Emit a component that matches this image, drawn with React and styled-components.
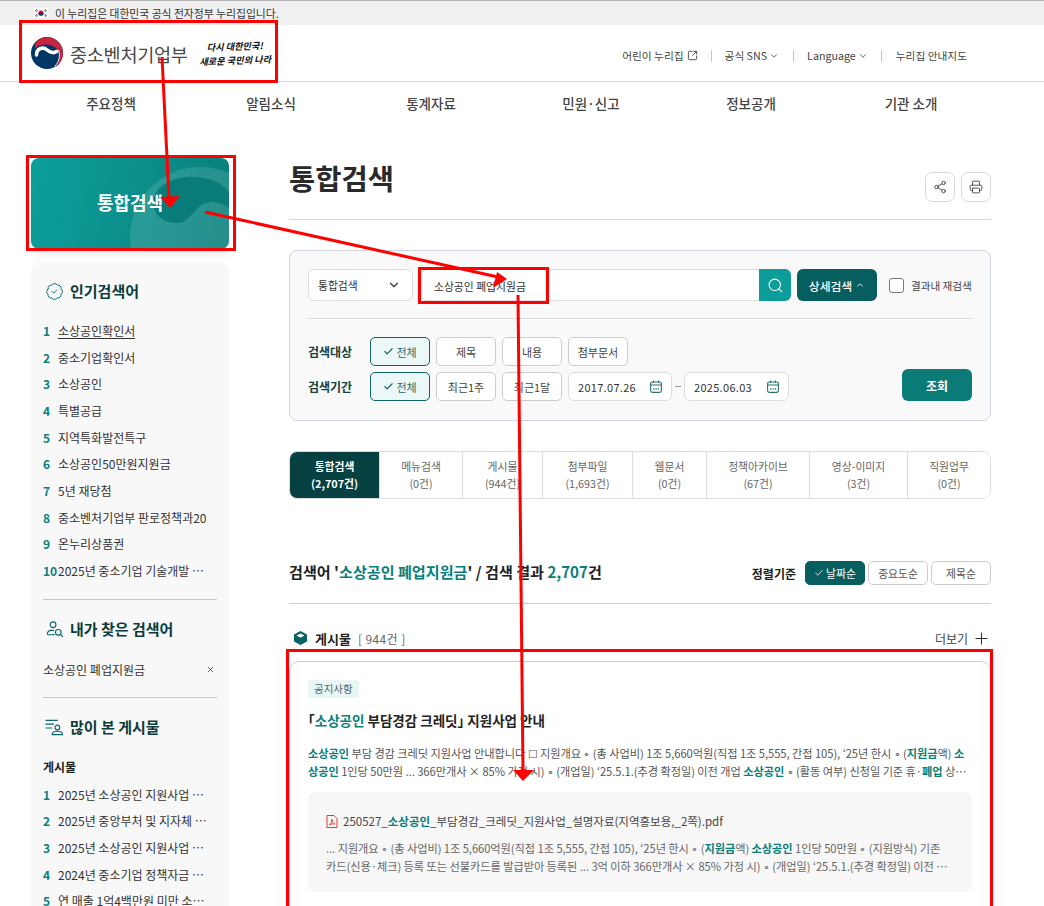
import React from 'react';
import styled, { createGlobalStyle } from 'styled-components';
import { ChevronDown, ChevronUp, SquareArrowOutUpRight, Share2, Printer, Search, Check, Plus, X, BadgeCheck } from 'lucide-react';

const FONT = '"Noto Sans CJK KR", "Noto Sans", sans-serif';
const Global = createGlobalStyle`
  html, body { margin: 0; padding: 0; background: #fff; }
  body { font-family: ${FONT}; color: #333; }
  #root { height: 906px; overflow: hidden; position: relative; }
  * { box-sizing: border-box; }
`;

const TEAL = '#0a7f7c';

const Page = styled.div`width: 1044px; height: 906px; position: relative; overflow: hidden;`;
const TopBar = styled.div`
  height: 25px; background: #f0f0f0; border-top: 1px solid #b5b5b5; padding-left: 34px;
  display: flex; align-items: center; gap: 7px; font-size: 10.8px; color: #333;
`;
const Header = styled.header`
  height: 57px; border-bottom: 1px solid #d9d9d9; padding: 0 77px 0 31px;
  display: flex; align-items: center; justify-content: space-between;
`;
const Logo = styled.div`display: flex; align-items: center; gap: 7px;`;
const LogoText = styled.span`font-size: 18.6px; color: #4a4a4a; letter-spacing: -0.3px; font-weight: 400;`;
const Slogan = styled.div`
  margin-left: 4px; font-size: 9.2px; line-height: 14px; color: #111; font-weight: 700;
  font-style: italic; transform: rotate(-2deg); text-align: center; white-space: nowrap;
`;
const Util = styled.nav`display: flex; align-items: center; font-size: 10.7px; color: #444; margin-top: 5px;`;
const UtilItem = styled.span`
  display: inline-flex; align-items: center; gap: ${p => p.$g || 3}px; padding: 0 ${p => p.$r || 13}px 0 14px; position: relative; line-height: 12px;
  &:last-child { padding: 0 0 0 15px; }
  &:not(:first-child)::before { content: ""; position: absolute; left: 0; top: 0; width: 1px; height: 12px; background: #c4c4c4; }
`;
const MainNav = styled.nav`
  width: 960px; margin-left: 31px; height: 42px; display: grid; grid-template-columns: repeat(6, 1fr);
  align-items: center; font-size: 13.5px; font-weight: 500; color: #444; text-align: center;
`;
const Body = styled.div`display: flex; gap: 60px; padding: 34px 0 0 31px;`;
const Side = styled.aside`width: 198px; flex: none; display: flex; flex-direction: column; gap: 13px;`;
const Hero = styled.div`
  height: 91px; border-radius: 8px; position: relative; overflow: hidden;
  background: linear-gradient(100deg, #0c9f9b, #0a7f7c);
  box-shadow: 0 6px 10px rgba(0,0,0,.08);
  display: flex; align-items: center; justify-content: center;
  color: #fff; font-size: 18px; font-weight: 700;
`;
const HeroArt = styled.svg`position: absolute; left: 0; top: 0;`;
const HeroLabel = styled.span`position: relative; margin-top: -4px;`;
const Panel = styled.div`background: #f8f8f8; border-radius: 10px 10px 0 0; padding: 17px 12px 0; height: 700px;`;
const PanelTitle = styled.h3`
  margin: 0; display: flex; align-items: center; gap: 6px; font-size: 15px; font-weight: 700; color: #0b3b3b;
  line-height: 24px; padding-left: 2px;
`;
const RankList = styled.ol`list-style: none; margin: ${p => p.$m || '15px 0 0'}; padding: 0;`;
const Rank = styled.li`display: flex; font-size: 12px; line-height: 26.67px; color: #333;`;
const RankNo = styled.b`width: 15px; flex: none; color: ${TEAL}; font-weight: 700;`;
const RankText = styled.span`
  flex: 0 1 auto; max-width: 152px; overflow: hidden; white-space: nowrap; text-overflow: ellipsis;
  ${p => p.$u && `text-decoration: underline; text-underline-offset: 2px;`}
`;
const SideRule = styled.hr`border: 0; border-top: 1px solid #c8c8c8; margin: ${p => p.$m || '14px 0 17px'};`;
const Recent = styled.div`
  display: flex; justify-content: space-between; align-items: center; font-size: 12px; color: #333; padding-right: 2px;
  margin-top: 20px; line-height: 18px;
`;
const SubHead = styled.div`font-size: 12px; font-weight: 700; color: #222; margin-top: 19px; line-height: 18px;`;
const Main = styled.main`width: 702px; flex: none;`;
const TitleRow = styled.div`
  height: 64px; margin-top: -2px; border-bottom: 1px solid #d9d9d9; display: flex; justify-content: space-between; align-items: flex-start;
`;
const H1 = styled.h1`margin: 1px 0 0; font-size: 28.5px; font-weight: 700; color: #2a2a2a; line-height: 42px;`;
const Tools = styled.div`display: flex; gap: 6px; margin-top: 16px;`;
const ToolBtn = styled.button`
  width: 30px; height: 30px; border: 1px solid #d9d9d9; border-radius: 7px; background: #fff; padding: 0;
  display: flex; align-items: center; justify-content: center; color: #333;
`;
const SearchPanel = styled.section`
  margin-top: 30px; height: 171px; background: #f9f9fa; border: 1px solid #cfd5de; border-radius: 8px; padding: 18px;
`;
const SearchRow = styled.div`display: flex; align-items: center; height: 32px;`;
const Select = styled.div`
  width: 105px; height: 32px; background: #fff; border: 1px solid #ddd; border-radius: 6px; padding: 0 11px 0 9px;
  display: flex; align-items: center; justify-content: space-between; font-size: 10.8px; color: #333; margin-right: 8px;
`;
const Input = styled.div`
  width: 338px; height: 32px; background: #fff; border: 1px solid #ddd; border-right: 0; border-radius: 6px 0 0 6px;
  display: flex; align-items: center; padding-left: 12px; font-size: 10.8px; color: #333; padding-top: 2px;
`;
const SearchBtn = styled.button`
  width: 32px; height: 32px; border: 0; padding: 0; background: #0c9c9a; border-radius: 0 6px 6px 0; color: #fff;
  display: flex; align-items: center; justify-content: center; margin-right: 6px;
`;
const Detail = styled.button`
  width: 80px; height: 32px; border: 0; padding: 0; background: #075e5e; border-radius: 6px; color: #fff;
  font: 500 11.8px ${FONT}; display: flex; align-items: center; justify-content: center; gap: 3px; margin-right: 12px;
`;
const Box = styled.span`width: 15px; height: 15px; flex: none; background: #fff; border: 1px solid #777; border-radius: 3px; margin-right: 7px;`;
const BoxLabel = styled.span`font-size: 10.6px; color: #444; white-space: nowrap;`;
const Rule = styled.hr`border: 0; border-top: 1px solid #ddd; margin: 17px 0 18px;`;
const FilterArea = styled.div`display: flex; justify-content: space-between; align-items: flex-end;`;
const FilterRows = styled.div`display: flex; flex-direction: column; gap: 6px;`;
const FilterRow = styled.div`display: flex; align-items: center; gap: 6px;`;
const FilterLabel = styled.b`width: 56px; font-size: 12px; font-weight: 700; color: #163f3f;`;
const Chip = styled.span`
  width: 60px; height: 29px; border-radius: 5px; display: inline-flex; align-items: center; justify-content: center; gap: 2px;
  font-size: 11px; color: ${p => p.$on ? '#2a6a6a' : '#444'};
  background: ${p => p.$on ? '#ecf7f7' : '#fff'};
  border: 1px solid ${p => p.$on ? '#0d6464' : '#ccc'};
`;
const DateBox = styled.span`
  width: ${p => p.$w}px; height: 29px; background: #fff; border: 1px solid #ddd; border-radius: 6px; padding: 0 9px;
  display: inline-flex; align-items: center; justify-content: space-between; font-size: 11px; color: #333; letter-spacing: .3px;
`;
const Dash = styled.span`margin: 0 -3px; flex: 0 0 6px; height: 1px; background: #999;`;
const Go = styled.button`
  width: 70px; height: 32px; border: 0; background: #0b7b78; color: #fff; border-radius: 6px;
  font: 700 12px ${FONT};
`;
const Tabs = styled.div`
  margin-top: 30px; height: 48px; display: grid; grid-template-columns: 89px 83px 80px 90px 74px 103px 98px 83px;
  border: 1px solid #ddd; border-radius: 8px; overflow: hidden;
`;
const Tab = styled.div`
  display: flex; flex-direction: column; align-items: center; justify-content: center; font-size: 10.8px; line-height: 17px;
  margin: -1px 0;
  color: ${p => p.$on ? '#fff' : '#666'}; font-weight: ${p => p.$on ? 700 : 400};
  background: ${p => p.$on ? '#064040' : '#fff'};
  &:not(:first-child) { border-left: 1px solid #ddd; }
`;
const ResultBar = styled.div`
  margin-top: 54px; height: 51px; padding-bottom: 14px; border-bottom: 1px solid #ccc;
  display: flex; align-items: center; justify-content: space-between;
`;
const ResultTitle = styled.h2`margin: 0; font-size: 15.1px; font-weight: 700; color: #222;`;
const Hl = styled.span`color: ${TEAL};`;
const Sort = styled.div`display: flex; align-items: center; gap: 3px; margin-top: 4px;`;
const SortLabel = styled.b`font-size: 12px; font-weight: 700; color: #222; margin-right: 6px;`;
const SortBtn = styled.span`
  width: 60px; height: 24px; border-radius: 5px; display: inline-flex; align-items: center; justify-content: center; gap: 2px; font-size: 10.8px;
  color: ${p => p.$on ? '#fff' : '#555'}; background: ${p => p.$on ? '#075e5e' : '#fff'};
  border: 1px solid ${p => p.$on ? '#075e5e' : '#ccc'};
`;
const SectionHead = styled.div`margin-top: 23px; height: 22px; display: flex; align-items: center; padding: 0 0 0 5px;`;
const SectionName = styled.b`font-size: 13px; font-weight: 700; color: #222; margin-left: 8px;`;
const SectionCount = styled.span`font-size: 12px; color: #666; margin-left: 7px; letter-spacing: .4px;`;
const More = styled.span`margin-left: auto; font-size: 12px; color: #444; display: inline-flex; align-items: center; gap: 4px;`;
const Card = styled.article`margin-top: 12px; border: 1px solid #ccc; border-radius: 10px; padding: 18px 18px 0; height: 300px;`;
const Badge = styled.span`
  display: block; width: fit-content; background: #e9f6f6; color: #4a6a6a; font-size: 10.5px; line-height: 18px; height: 18px; padding: 0 6px; border-radius: 3px;
`;
const CardTitle = styled.h3`margin: 10px 0 0; font-size: 13.5px; font-weight: 700; color: #222; line-height: 24px;`;
const Corner = styled.span`font-feature-settings: "halt";`;
const Clamp = styled.p`
  margin: ${p => p.$m}; font-size: 11.2px; letter-spacing: -.05px; line-height: 18px; color: ${p => p.$c || '#555'};
  display: -webkit-box; -webkit-box-orient: vertical; -webkit-line-clamp: 2; overflow: hidden; word-break: break-all;
  & b { color: ${TEAL}; font-weight: 700; }
`;
const FileBox = styled.div`margin-top: 12px; height: 100px; background: #f7f7f7; border-radius: 8px; padding: 19px 18px 0;`;
const FileName = styled.div`
  display: flex; align-items: center; gap: 5px; font-size: 11.5px; line-height: 20px; color: #444;
  & b { color: ${TEAL}; font-weight: 700; }
`;
const Overlay = styled.svg`position: absolute; left: 0; top: 0; pointer-events: none;`;

const Flag = () => (
  <svg width="14" height="10" viewBox="0 0 14 10"><rect width="14" height="10" fill="#fff" /><circle cx="7" cy="5" r="2.6" fill="#c60c30" /><path d="M4.4 5a2.6 2.6 0 0 0 5.2 0c-1 1-1.6-.6-2.6 0s-1.6.8-2.6 0z" fill="#003478" /><path d="M1.5 3 3 1M2 4l1.6-2M11 1l1.5 2M10.500 2l1.600 2M1.500 7 3 9M11 9l1.500-2M10.500 8l1.600-2M2 6l1.600 2" stroke="#333" strokeWidth=".7" /></svg>
);
const Emblem = () => (
  <svg width="32" height="32" viewBox="0 0 32 32">
    <circle cx="16" cy="16" r="16" fill="#003764" />
    <path d="M5 4.500A16 16 0 0 1 32 16C32 22 29 27 25 30 28 25 29.500 20 28 15.500 26 10 20 7.500 14.500 7.500 10.500 7.500 7.500 8.500 4.500 11.500 3.500 9 4 6.500 5 4.500Z" fill="#c9243f" />
    <path d="M5.500 18C5.500 11.500 12 9.500 15.500 12.500 18.500 15 22 17 25.500 14.500" fill="none" stroke="#fff" strokeWidth="3.6" strokeLinecap="round" />
    <path d="M27.500 13C29.500 19 28 25 24 29" fill="none" stroke="#fff" strokeWidth="1" />
  </svg>
);
const PersonSearch = () => (
  <svg width="19" height="20" viewBox="0 0 20 20" fill="none" stroke="#0a6a6a" strokeWidth="1.200" strokeLinecap="round"><circle cx="8.500" cy="5.500" r="3" /><path d="M9 11.500H6.500a4 4 0 0 0-4 3.500c0 .6.400 1 1 1H10" /><circle cx="14" cy="13.500" r="3" /><path d="m16.200 15.700 2.300 2.300" /></svg>
);
const ListPerson = () => (
  <svg width="19" height="20" viewBox="0 0 20 20" fill="none" stroke="#0a6a6a" strokeWidth="1.200" strokeLinecap="round"><path d="M1 3h12M1 7h8M1 11h6" /><circle cx="13" cy="10.500" r="2.500" /><path d="M7.500 18c0-2.500 2-3.500 5.500-3.500s5.500 1 5.500 3.500z" /></svg>
);
const Cube = () => (
  <svg width="13" height="14" viewBox="0 0 13 14"><path d="M6.500 0 13 3.500v7L6.500 14 0 10.500v-7z" fill="#0a5f5f" /><path d="M6.500 2.500 10.500 4.600 6.500 6.800 2.500 4.600z" fill="#fff" /></svg>
);
const Pdf = () => (
  <svg width="12" height="13" viewBox="0 0 12 13" fill="none" stroke="#e5383b"><path d="M1 .5h7l3 3v9H1z" /><path d="M3 10c2-1 3-3 3-6 0 3 1 4 3 5-2-.3-4 0-6 1z" strokeWidth=".9" /></svg>
);
const Cal = () => (
  <svg width="12" height="13" viewBox="0 0 12 13" fill="none" stroke="#2a6f6f" strokeWidth="1.100">
    <rect x=".6" y="2" width="10.800" height="10.400" rx="1.800" />
    <path d="M.6 5h10.800M3.500.5v2.500M8.500.5v2.500" />
    <path d="M3.200 9h1.200M5.500 9h1.200M7.800 9H9" strokeWidth="1.300" />
  </svg>
);

const top = ['소상공인확인서','중소기업확인서','소상공인','특별공급','지역특화발전특구','소상공인50만원지원금','5년 재당첨','중소벤처기업부 판로정책과20','온누리상품권','2025년 중소기업 기술개발 지원사업 공고'];
const viewed = ['2025년 소상공인 지원사업 통합 공고','2025년 중앙부처 및 지자체 지원사업','2025년 소상공인 지원사업 안내 자료','2024년 중소기업 정책자금 융자 계획','연 매출 1억4백만원 미만 소상공인 지원'];
const tabs = [['통합검색','2,707건'],['메뉴검색','0건'],['게시물','944건'],['첨부파일','1,693건'],['웹문서','0건'],['정책아카이브','67건'],['영상-이미지','3건'],['직원업무','0건']];

export default function App() {
  return (
    <Page>
      <Global />
      <TopBar><Flag /><span>이 누리집은 대한민국 공식 전자정부 누리집입니다.</span></TopBar>
      <Header>
        <Logo>
          <Emblem />
          <LogoText>중소벤처기업부</LogoText>
          <Slogan>다시 대한민국!<br />새로운 국민의 나라</Slogan>
        </Logo>
        <Util>
          <UtilItem>어린이 누리집 <SquareArrowOutUpRight size={11} /></UtilItem>
          <UtilItem $g={2} $r={14}>공식 SNS <ChevronDown size={10} /></UtilItem>
          <UtilItem $g={2}>Language <ChevronDown size={10} /></UtilItem>
          <UtilItem>누리집 안내지도</UtilItem>
        </Util>
      </Header>
      <MainNav>{['주요정책','알림소식','통계자료','민원·신고','정보공개','기관 소개'].map(n => <span key={n}>{n}</span>)}</MainNav>
      <Body>
        <Side>
          <Hero>
            <HeroArt width="198" height="91" viewBox="0 0 198 91">
              <circle cx="169" cy="79" r="70" fill="#fff" fillOpacity=".12" />
              <path d="M122 45C122 28 145 17 165 19 180 20 192 26 198 34V50C190 44 180 42 172 46 162 52 158 65 146 65 132 65 122 56 122 45Z" fill="#0a7c7a" />
            </HeroArt>
            <HeroLabel>통합검색</HeroLabel>
          </Hero>
          <Panel>
            <PanelTitle><BadgeCheck size={19} color="#0a6a6a" strokeWidth={1.200} />인기검색어</PanelTitle>
            <RankList>
              {top.map((t, i) => <Rank key={t}><RankNo>{i + 1}</RankNo><RankText $u={i === 0}>{t}</RankText></Rank>)}
            </RankList>
            <SideRule />
            <PanelTitle><PersonSearch />내가 찾은 검색어</PanelTitle>
            <Recent><span>소상공인 폐업지원금</span><X size={9} strokeWidth={2} /></Recent>
            <SideRule $m="18px 0 17px" />
            <PanelTitle><ListPerson />많이 본 게시물</PanelTitle>
            <SubHead>게시물</SubHead>
            <RankList $m="6px 0 0">
              {viewed.map((t, i) => <Rank key={t}><RankNo>{i + 1}</RankNo><RankText>{t}</RankText></Rank>)}
            </RankList>
          </Panel>
        </Side>
        <Main>
          <TitleRow>
            <H1>통합검색</H1>
            <Tools>
              <ToolBtn><Share2 size={14} strokeWidth={1.400} /></ToolBtn>
              <ToolBtn><Printer size={14} strokeWidth={1.400} /></ToolBtn>
            </Tools>
          </TitleRow>
          <SearchPanel>
            <SearchRow>
              <Select>통합검색<ChevronDown size={14} /></Select>
              <Input>소상공인 폐업지원금</Input>
              <SearchBtn><Search size={17} strokeWidth={1.500} /></SearchBtn>
              <Detail>상세검색<ChevronUp size={10} /></Detail>
              <Box /><BoxLabel>결과내 재검색</BoxLabel>
            </SearchRow>
            <Rule />
            <FilterArea>
              <FilterRows>
                <FilterRow>
                  <FilterLabel>검색대상</FilterLabel>
                  <Chip $on><Check size={11} color="#0d6464" strokeWidth={2.400} />전체</Chip><Chip>제목</Chip><Chip>내용</Chip><Chip>첨부문서</Chip>
                </FilterRow>
                <FilterRow>
                  <FilterLabel>검색기간</FilterLabel>
                  <Chip $on><Check size={11} color="#0d6464" strokeWidth={2.400} />전체</Chip><Chip>최근1주</Chip><Chip>최근1달</Chip>
                  <DateBox $w={104}>2017.07.26<Cal /></DateBox>
                  <Dash />
                  <DateBox $w={105}>2025.06.03<Cal /></DateBox>
                </FilterRow>
              </FilterRows>
              <Go>조회</Go>
            </FilterArea>
          </SearchPanel>
          <Tabs>
            {tabs.map(([a, b], i) => <Tab key={a} $on={i === 0}><span>{a}</span><span>({b})</span></Tab>)}
          </Tabs>
          <ResultBar>
            <ResultTitle>검색어 '<Hl>소상공인 폐업지원금</Hl>' / 검색 결과 <Hl>2,707</Hl>건</ResultTitle>
            <Sort>
              <SortLabel>정렬기준</SortLabel>
              <SortBtn $on><Check size={10} />날짜순</SortBtn><SortBtn>중요도순</SortBtn><SortBtn>제목순</SortBtn>
            </Sort>
          </ResultBar>
          <SectionHead>
            <Cube /><SectionName>게시물</SectionName><SectionCount>[ 944건 ]</SectionCount>
            <More>더보기<Plus size={19} strokeWidth={1.200} color="#222" /></More>
          </SectionHead>
          <Card>
            <Badge>공지사항</Badge>
            <CardTitle><Corner>「</Corner><Hl>소상공인</Hl> 부담경감 크레딧<Corner>」</Corner> 지원사업 안내</CardTitle>
            <Clamp $m="12px 0 0">
              <b>소상공인</b> 부담 경감 크레딧 지원사업 안내합니다 ☐ 지원개요 ∘ (총 사업비) 1조 5,660억원(직접 1조 5,555, 간접 105), ‘25년 한시 ∘ (<b>지원금</b>액) <b>소상공인</b> 1인당 50만원 ... 366만개사 × 85% 가정 시) ∘ (개업일) ‘25.5.1.(추경 확정일) 이전 개업 <b>소상공인</b> ∘ (활동 여부) 신청일 기준 휴·<b>폐업</b> 상태가 아닌 사업자 ∘ (신청 방법) 전용 누리집
            </Clamp>
            <FileBox>
              <FileName><Pdf /><span>250527_<b>소상공인</b>_부담경감_크레딧_지원사업_설명자료(지역홍보용,_2쪽).pdf</span></FileName>
              <Clamp $m="8px 0 0" $c="#666">
                ... 지원개요 ∘ (총 사업비) 1조 5,660억원(직접 1조 5,555, 간접 105), ‘25년 한시 ∘ (<b>지원금</b>액) <b>소상공인</b> 1인당 50만원 ∘ (지원방식) 기존<br />카드(신용·체크) 등록 또는 선불카드를 발급받아 등록된 ... 3억 이하 366만개사 × 85% 가정 시) ∘ (개업일) ‘25.5.1.(추경 확정일) 이전 개업 소상공인 ∘ (활동 여부) 신청일 기준
              </Clamp>
            </FileBox>
          </Card>
        </Main>
      </Body>
      <Overlay width="1044" height="906" viewBox="0 0 1044 906" fill="none" stroke="#ff0000" strokeWidth="3">
        <rect x="20.500" y="21.500" width="256" height="60" />
        <rect x="27.500" y="156.500" width="207" height="93" />
        <rect x="419.500" y="268.500" width="128" height="34" />
        <rect x="287.500" y="650.500" width="704" height="280" />
        <path d="M162 57 169 198" />
        <path d="M160 197 180 196 170 208z" fill="#ff0000" stroke="none" />
        <path d="M205 212 498 277" />
        <path d="M497 272 493 288 507 279z" fill="#ff0000" stroke="none" />
        <path d="M518 295 523 771" />
        <path d="M513 770 534 770 523 781z" fill="#ff0000" stroke="none" />
      </Overlay>
    </Page>
  );
}
